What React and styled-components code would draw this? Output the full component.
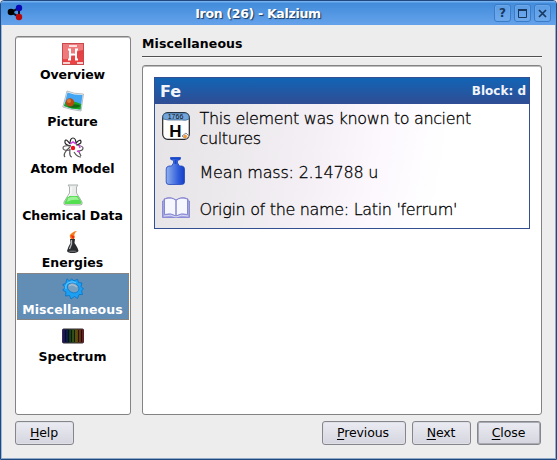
import React from 'react';
import styled, { createGlobalStyle, css } from 'styled-components';

const Global = createGlobalStyle`
  * { box-sizing: border-box; }
  body { margin: 0; background: #ededed; font-family: "DejaVu Sans", sans-serif; color: #000; }
  svg { display: block; flex: none; }
`;

const Window = styled.div`
  width: 557px;
  height: 460px;
  display: flex;
  flex-direction: column;
  background: #ededed;
  border: 1px solid #1f497f;
  border-radius: 4px 4px 0 0;
  box-shadow: inset -1px -1px 0 #8fa9c8, inset 1px 0 0 #9fb9d8;
`;

const TitleBar = styled.header`
  height: 24px;
  display: grid;
  grid-template-columns: 18px 1fr auto;
  align-items: center;
  padding: 0 5px 0 6px;
  background: linear-gradient(#74aff0 0, #74aff0 1px, #418cdb 2px, #66a2ea 100%);
  border-radius: 3px 3px 0 0;
`;

const WindowTitle = styled.h1`
  margin: 0;
  font-size: 12.5px;
  line-height: 20px;
  padding: 1px 3px 0 0;
  font-weight: bold;
  text-align: center;
  letter-spacing: -0.3px;
  color: #fff;
  text-shadow: 1px 1px 1px #16365f;
`;

const Controls = styled.div`
  display: flex;
  gap: 3px;
`;

const Control = styled.button`
  width: 17px;
  height: 18px;
  padding: 0;
  display: grid;
  place-items: center;
  border: 1px solid #3b7cc9;
  border-radius: 3px;
  background: linear-gradient(#5b9ce4, #70aaed);
  box-shadow: inset 0 0 0 1px #6aa6ea;
  color: #17395f;
  font: bold 12px/16px "DejaVu Sans", sans-serif;
`;

const Body = styled.div`
  flex: 1;
  display: flex;
  padding: 11px 14px 0;
  gap: 11px;
`;

const panel = css`
  background: #fff;
  border: 1px solid #838383;
  border-radius: 3px;
  box-shadow: inset 0 1px 0 #bdbdbd;
`;

const Sidebar = styled.nav`
  ${panel}
  width: 116px;
  height: 379px;
  padding: 1px;
`;

const Item = styled.div`
  height: 47px;
  display: flex;
  flex-direction: column;
  align-items: center;
  padding-top: 5px;
  gap: 1px;
  ${p => p.$selected && css`
    background: #628db5;
    color: #fff;
    outline: 1px dotted #a87b52;
    outline-offset: -1px;
  `}
`;

const Label = styled.span`
  font-size: 12.5px;
  line-height: 17px;
  font-weight: bold;
  white-space: nowrap;
  padding-right: 1px;
  letter-spacing: ${p => p.$track || 0}px;
`;

const Content = styled.main`
  width: 400px;
  display: flex;
  flex-direction: column;
`;

const Heading = styled.h2`
  margin: 0;
  height: 21px;
  padding-top: 1px;
  font-size: 12.5px;
  line-height: 14px;
  letter-spacing: 0.1px;
  border-bottom: 1px solid #505050;
  box-shadow: 0 1px 0 #fafafa;
`;

const Panel = styled.section`
  ${panel}
  margin-top: 8px;
  height: 350px;
  padding: 11px;
`;

const Card = styled.article`
  width: 376px;
  height: 152px;
  border: 1px solid #344f91;
  background: linear-gradient(100deg, #e5e3e6 0, #f3eff4 42%, #fcf8fe 60%, #fff 76%);
`;

const CardHeader = styled.div`
  height: 26px;
  padding: 0 3px 0 5px;
  display: flex;
  align-items: center;
  justify-content: space-between;
  color: #f2f4fa;
  font-weight: bold;
  font-size: 12px;
  background: linear-gradient(#1264b5, #304d94);
`;

const ElementSymbol = styled.span`
  font-size: 16px;
`;

const Fact = styled.div`
  height: ${p => p.$height}px;
  display: grid;
  grid-template-columns: 28px 1fr;
  align-items: center;
  column-gap: 9.5px;
  padding: ${p => p.$top || 0}px 40px 0 7px;
  font-weight: 200;
  font-size: 16px;
  line-height: 20px;
  letter-spacing: ${p => p.$track}px;
  -webkit-text-stroke: 0.3px #000;

  > svg {
    margin-top: ${p => p.$iconShift || 0}px;
    -webkit-text-stroke: 0;
    letter-spacing: 0;
  }
`;

const Footer = styled.footer`
  height: 44px;
  display: flex;
  align-items: flex-start;
  padding: 6px 15px 0 14px;
  gap: 6px;
`;

const Button = styled.button`
  width: ${p => p.$width}px;
  height: 24px;
  padding: 0 ${p => p.$inset || 1}px 1px 0;
  margin-right: ${p => (p.$first ? 'auto' : 0)};
  border: 1px solid #85868d;
  border-radius: 3px;
  background: linear-gradient(#ebebf3, #d5d5df);
  box-shadow: ${p => (p.$focus ? 'inset 0 0 0 1px #a9abb2' : 'inset 0 0 0 1px #dfdfe6')};
  color: #000;
  font: 12.5px/20px "DejaVu Sans", sans-serif;
  letter-spacing: -0.1px;
`;

const Key = styled.span`
  text-decoration: underline;
  text-decoration-thickness: 1px;
  text-underline-offset: 2px;
`;

const Logo = () => (
  <svg width="18" height="18" viewBox="0 0 18 18">
    <path d="M4 8L12 4V13Z" fill="none" stroke="#071327" strokeWidth="2" />
    <circle cx="4" cy="8" r="3.3" fill="#000" />
    <circle cx="12" cy="4" r="3.2" fill="#0909b5" />
    <circle cx="12" cy="13" r="3.2" fill="#b9080b" />
  </svg>
);

const OverviewIcon = () => (
  <svg width="22" height="22" viewBox="0 0 22 22">
    <defs><linearGradient id="red" x2="0" y2="1"><stop stopColor="#df3e43" /><stop offset="1" stopColor="#eb4446" /></linearGradient></defs>
    <rect x=".5" y=".5" width="21" height="21" fill="url(#red)" stroke="#c7494b" />
    <path d="M1 1H21V7Q13 8 9 14Q5 17 1 16Z" fill="#f49a9b" opacity=".65" />
    <path d="M8 6V17M14 6V17M7 11.5H15M6 6.5h3M13 6.5h3M6 16.5h3M13 16.5h3" stroke="#fff" strokeWidth="2" />
    <path d="M7 3H15M1 20H8M15 20H21" stroke="#fff" strokeWidth="1.5" />
  </svg>
);

const PictureIcon = () => (
  <svg width="22" height="22" viewBox="0 0 22 22">
    <path d="M5 1Q12 4 21.5 4L19 21Q10 20 .8 17Z" fill="#e9eef0" stroke="#a8afb2" strokeWidth=".8" />
    <path d="M5.5 2.5Q12 5 20.5 5L18.5 19.5Q9 19 2 16Z" fill="#42a6f5" />
    <path d="M3.5 12Q11 10 19.2 14L18.5 19.5Q9 19 2 16Z" fill="#18a624" />
    <ellipse cx="12" cy="16" rx="6" ry="1.8" fill="#136b16" />
    <circle cx="8" cy="12.4" r="4.2" fill="#b64a15" /><circle cx="7" cy="11" r="2" fill="#d97932" />
  </svg>
);

const AtomIcon = () => (
  <svg width="22" height="22" viewBox="0 0 22 22" fill="none" stroke="#222" strokeWidth="1.2">
    <path d="M8 7Q8 1 11 1Q14 1 14 7M8 7Q4 1 3 4Q2 8 9 9M14 6Q19 1 19 5Q19 7 14 8" />
    <path d="M9 9Q.7 8 1 11Q1 14 8 13M15 8Q21 9 21 11Q21 14 16 14" stroke="#555" />
    <path d="M8 10Q0 17 3 20M8 12Q7 20 10 20M12 15Q15 20 19 20M17 15L19 19" stroke="#555" />
    <path d="M8 7L11 5L14 7M17 8L18 11M15 14L18 15" stroke="#d13be0" strokeWidth="1.5" />
    <circle cx="11" cy="11" r="1.6" fill="#ef1120" stroke="#ef1120" />
  </svg>
);

const FlaskIcon = () => (
  <svg width="22" height="22" viewBox="0 0 22 22">
    <path d="M6 1H16L14.5 3V9L20 18Q21 21 18 21H4Q1 21 2 18L7.5 9V3Z" fill="#e9eceb" stroke="#a9b1ad" />
    <path d="M6 12H16L19.5 18Q20 20 18 20H4Q2 20 2.8 18Z" fill="#53df50" />
    <path d="M6 14Q10 12 15 13L17 16Q10 15 5 18Z" fill="#9bf296" /><path d="M9 3V9L6 13" stroke="#fff" fill="none" />
  </svg>
);

const BurnerIcon = () => (
  <svg width="22" height="22" viewBox="0 0 22 22">
    <path d="M9 8Q6 4 10 2Q12 0 15 0Q11 3 13 6L12 8Z" fill="#f67c19" /><path d="M10 7L9 4L12 5V8Z" fill="#f02d17" />
    <path d="M8 8H13L12.5 12Q16 17 16.5 20Q15 22 10.5 22Q6 22 5 20Q6 16 8.5 12Z" fill="#292b2e" />
    <path d="M9.5 9V13L7.5 18" stroke="#b5b7b9" strokeWidth="1.3" fill="none" /><ellipse cx="10.7" cy="20.3" rx="4" ry=".8" fill="#66696c" />
  </svg>
);

const GearIcon = () => (
  <svg width="22" height="22" viewBox="0 0 22 22">
    <path d="M5 .8L7.5 3L9.5 .8L12 2.8L15.5 1.2L16.5 4.5L20 5L19 8.5L21.5 11L19.5 12.8L20.5 16.5L17 16.5L15.5 20.5L12.5 18.5L9 21L7.5 17.5L3.5 18L4 14L.8 12L3 9.5L.8 6.5L3.8 5.5Z" fill="#1d9ff2" stroke="#0873c6" strokeWidth=".8" strokeLinejoin="round" />
    <ellipse cx="11.2" cy="9.8" rx="6" ry="4.8" transform="rotate(28 11.2 9.8)" fill="#779fc0" stroke="#0876ce" strokeWidth=".7" />
    <path d="M7 8Q10 5 15 9" stroke="#a9bdcd" fill="none" strokeWidth="1.5" />
    <path d="M4 11Q3 6 7 4.5Q11 3 14 5" stroke="#5ac5ff" fill="none" strokeWidth="1.2" />
  </svg>
);

const SpectrumIcon = () => (
  <svg width="22" height="22" viewBox="0 0 22 22">
    <defs><linearGradient id="spec"><stop stopColor="#1d1085" /><stop offset=".25" stopColor="#0b2037" /><stop offset=".42" stopColor="#1b4c18" /><stop offset=".65" stopColor="#59520d" /><stop offset="1" stopColor="#850b12" /></linearGradient></defs>
    <rect x=".5" y="4" width="21" height="14" rx="1" fill="url(#spec)" stroke="#352f36" />
    <path d="M3.5 5v12M6.5 5v12M9.5 5v12M12.5 5v12M16.5 5v12M19.5 5v12" stroke="#080b0a" strokeWidth=".8" />
  </svg>
);

const CalendarIcon = () => (
  <svg width="28" height="28" viewBox="0 0 28 28">
    <rect x=".7" y=".7" width="26.6" height="26.6" rx="5" fill="#fff" stroke="#252525" strokeWidth="1.2" />
    <path d="M1 7V4Q1 1 5 1H23Q27 1 27 5V7Q24 9 20 8H6Z" fill="#72a5dc" stroke="#2f5680" strokeWidth=".7" />
    <text x="13.5" y="6.6" textAnchor="middle" fontFamily="Liberation Sans" fontWeight="normal" fontSize="7" fill="#111">1766</text>
    <text x="13.5" y="24.6" textAnchor="middle" fontFamily="Liberation Sans" fontWeight="bold" fontSize="17" fill="#050505">H</text>
    <path d="M20 24L24 21L27 24L24 27Z" fill="#eee" stroke="#8e898c" /><circle cx="23.2" cy="24.5" r="1.8" fill="#f09a35" />
  </svg>
);

const WeightIcon = () => (
  <svg width="28" height="28" viewBox="0 0 28 28">
    <defs><linearGradient id="mass"><stop stopColor="#91b0ed" /><stop offset=".65" stopColor="#315edb" /><stop offset="1" stopColor="#143ec5" /></linearGradient></defs>
    <path d="M8.5 .6H18.5L18 2.5L15.5 3.5V6L17.5 9H20Q22.5 9.5 22.5 12V25Q22.5 27.5 19.5 27.5H7Q4.2 27.5 4.2 25V12Q4.2 9.5 7 9H9.5L11.5 6V3.5L9 2.5Z" fill="url(#mass)" stroke="#2148bd" strokeWidth=".8" />
    <path d="M8.5 1.5H18.5M13.5 3V7" stroke="#1747cc" strokeWidth="2" />
  </svg>
);

const BookIcon = () => (
  <svg width="28" height="28" viewBox="0 0 28 28">
    <path d="M.5 7H2V5Q8 2 14 6Q20 2 26 5V7H27.5V23.5H.5Z" fill="#a2a2df" stroke="#8b8bd6" />
    <path d="M2.5 5Q10 2.5 14 6.5V22Q9 18.5 2.5 20.5ZM14 6.5Q18 2.5 25.5 5V20.5Q19 18.5 14 22Z" fill="#f6f6ff" stroke="#8888d0" />
    <path d="M2 22Q9 20 14 23Q19 20 26 22" fill="none" stroke="#d9d9f5" />
  </svg>
);

const SECTIONS = [
  ['Overview', OverviewIcon, -0.1], ['Picture', PictureIcon], ['Atom Model', AtomIcon, -0.05],
  ['Chemical Data', FlaskIcon, -0.08], ['Energies', BurnerIcon, 0.05], ['Miscellaneous', GearIcon, 0.1], ['Spectrum', SpectrumIcon],
];

export default function App() {
  return (
    <>
      <Global />
      <Window>
        <TitleBar>
          <Logo />
          <WindowTitle>Iron (26) - Kalzium</WindowTitle>
          <Controls>
            <Control>?</Control>
            <Control><svg width="9" height="9" viewBox="0 0 9 9"><path d="M.5 1H8.5V8.5H.5Z" fill="none" stroke="currentColor" /><path d="M0 1H9" stroke="currentColor" strokeWidth="2" /></svg></Control>
            <Control><svg width="9" height="9" viewBox="0 0 9 9"><path d="M1 1L8 8M8 1L1 8" stroke="currentColor" strokeWidth="1.7" /></svg></Control>
          </Controls>
        </TitleBar>
        <Body>
          <Sidebar>
            {SECTIONS.map(([name, Icon, track]) => (
              <Item key={name} $selected={name === 'Miscellaneous'}><Icon /><Label $track={track}>{name}</Label></Item>
            ))}
          </Sidebar>
          <Content>
            <Heading>Miscellaneous</Heading>
            <Panel>
              <Card>
                <CardHeader><ElementSymbol>Fe</ElementSymbol><span>Block: d</span></CardHeader>
                <Fact $height={49} $track={-0.36} $iconShift={-5}><CalendarIcon /><span>This element was known to ancient cultures</span></Fact>
                <Fact $height={37} $track={-0.19} $top={2} $iconShift={-4}><WeightIcon /><span>Mean mass: 2.14788 u</span></Fact>
                <Fact $height={37} $track={-0.32} $top={2} $iconShift={-3}><BookIcon /><span>Origin of the name: Latin 'ferrum'</span></Fact>
              </Card>
            </Panel>
          </Content>
        </Body>
        <Footer>
          <Button $width={59} $first><Key>H</Key>elp</Button>
          <Button $width={84} $inset={2}><Key>P</Key>revious</Button>
          <Button $width={59}><Key>N</Key>ext</Button>
          <Button $width={64} $focus><Key>C</Key>lose</Button>
        </Footer>
      </Window>
    </>
  );
}
